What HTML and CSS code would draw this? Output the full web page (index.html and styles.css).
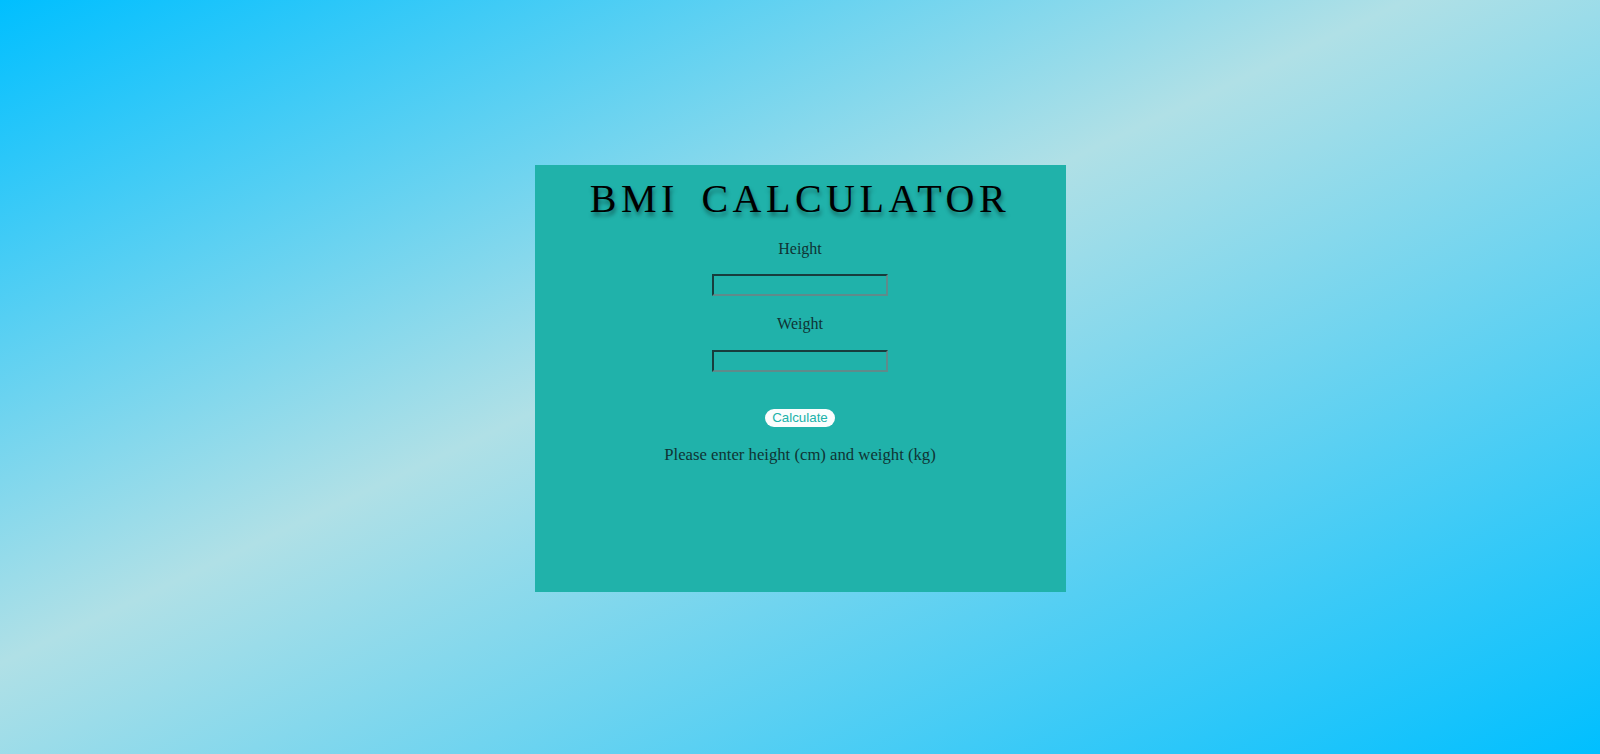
FILE: index.html
```html
<!DOCTYPE html>
<html lang="en">
<head>
<meta charset="utf-8">
<title>BMI Calculator</title>
<link rel="stylesheet" href="styles.css">
</head>
<body>
<main class="card">
  <h1 class="title">BMI CALCULATOR</h1>
  <label class="label label-first" for="height">Height</label>
  <input class="field" id="height" type="text">
  <label class="label" for="weight">Weight</label>
  <input class="field field-second" id="weight" type="text">
  <button class="calc" type="button">Calculate</button>
  <p class="result">Please enter height (cm) and weight (kg)</p>
</main>
</body>
</html>
```
FILE: styles.css
```css
html, body {
  margin: 0;
  padding: 0;
  height: 100%;
}
body {
  background: linear-gradient(to bottom right, #00bfff 0%, #b0e0e6 44%, #00bfff 100%);
  display: flex;
  align-items: center;
  justify-content: center;
  font-family: "Liberation Serif", "Times New Roman", serif;
}
.card {
  box-sizing: border-box;
  width: 531px;
  height: 427px;
  margin-top: 2px;
  padding-top: 11px;
  background: #20b2aa;
  display: flex;
  flex-direction: column;
  align-items: center;
}
.title {
  margin: 0;
  font-size: 40px;
  line-height: 46px;
  font-weight: normal;
  letter-spacing: 4.5px;
  word-spacing: 8px;
  color: #000;
  text-shadow: 1px 4px 4px rgba(0, 0, 0, 0.4);
}
.label {
  display: block;
  font-size: 16px;
  line-height: 18px;
  color: #0f3434;
  margin-top: 19px;
}
.label-first {
  margin-top: 18px;
}
.field {
  box-sizing: border-box;
  width: 176px;
  height: 22px;
  margin: 16px 0 0;
  padding: 1px 2px;
  background: transparent;
  border-width: 2px;
  border-style: solid;
  border-color: #173d3d #5f8b8b #5f8b8b #173d3d;
  outline: none;
}
.field-second {
  margin-top: 17px;
}
.calc {
  margin-top: 37px;
  height: 18px;
  padding: 0 7px;
  border: none;
  border-radius: 9px;
  background: #fbfdfd;
  color: #20b2aa;
  font-family: "Liberation Sans", Arial, sans-serif;
  font-size: 13.33px;
  line-height: 18px;
}
.result {
  margin: 18px 0 0;
  font-size: 16.7px;
  line-height: 19px;
  color: #0f3434;
}
```
